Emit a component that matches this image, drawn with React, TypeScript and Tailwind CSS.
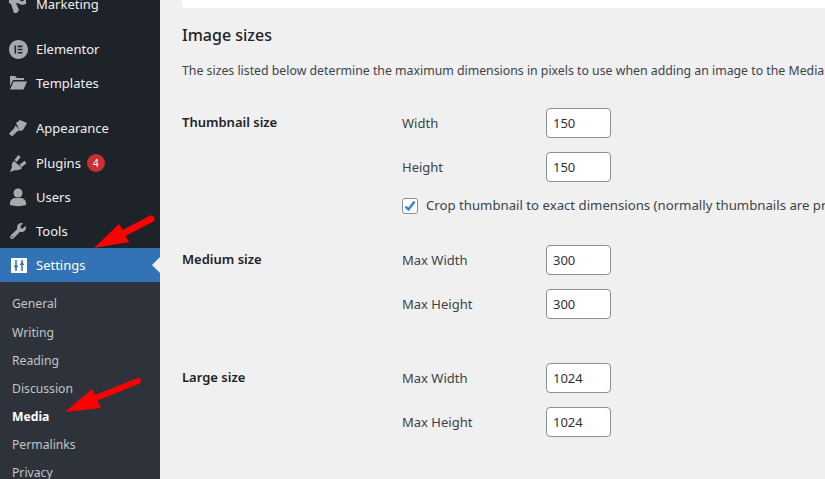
import { FaWrench } from "react-icons/fa";
import { SiElementor } from "react-icons/si";
import type { ReactNode } from "react";

function Icon({ children }: { children: ReactNode }) {
  return (
    <svg width="20" height="20" viewBox="0 0 20 20" fill="currentColor">
      {children}
    </svg>
  );
}

function MenuItem({ icon, label, badge }: { icon: ReactNode; label: string; badge?: string }) {
  return (
    <div className="flex h-[34px] items-center text-[#f0f0f1]">
      <span className="flex w-[36px] shrink-0 justify-center text-[#a7aaad]">{icon}</span>
      <span className="pt-[2px]">{label}</span>
      {badge && (
        <span className="ml-[6px] flex h-[18px] w-[18px] items-center justify-center rounded-full bg-[#ca2f33] text-[10px] text-white">
          {badge}
        </span>
      )}
    </div>
  );
}

function SizeField({ label, value }: { label: string; value: string }) {
  return (
    <div className="flex h-[30px] items-center">
      <span className="w-[144px] shrink-0 pt-[2px] text-[#3c434a]">{label}</span>
      <input
        readOnly
        value={value}
        className="h-[30px] w-[65px] rounded-[4px] border border-[#8c8f94] bg-white px-[6px] text-[#2c3338] outline-none"
      />
    </div>
  );
}

function SizeRow({ title, className, children }: { title: string; className: string; children: ReactNode }) {
  return (
    <div className={`flex ${className}`}>
      <div className="w-[220px] shrink-0 pt-[5px] font-semibold text-[#1d2327]">{title}</div>
      <div className="flex min-w-0 flex-col gap-[14px]">{children}</div>
    </div>
  );
}

export default function App() {
  return (
    <div className="relative flex h-[479px] w-[825px] overflow-hidden bg-[#f0f0f0] font-['Noto_Sans',sans-serif] text-[13px]">
      <aside className="-mt-[13px] w-[160px] shrink-0 bg-[#1e232a]">
        <MenuItem
          label="Marketing"
          icon={
            <Icon>
              <path d="M1 4l5-1 8-3 4 2v8l-4 1-5-2-1 0 3 7-2 3h-3l-3-9-2-1z" />
              <circle cx="14" cy="5" r="2.2" fill="#1e232a" />
            </Icon>
          }
        />
        <div className="mt-[11px]">
          <MenuItem icon={<SiElementor size={19} />} label="Elementor" />
          <MenuItem
            label="Templates"
            icon={
              <Icon>
                <path d="M2 3h5l2 2h7v2H5l-3 6z" />
                <path d="M5.5 8.500H19l-3.500 8H2z" />
              </Icon>
            }
          />
        </div>
        <div className="mt-[11px]">
          <MenuItem
            label="Appearance"
            icon={
              <Icon>
                <path d="M8 5l4-3 7 3-4 7-3 1z" />
                <path d="M7.500 7.500l4.500 4.500-3 1.500-5 5-3-3 5-5z" />
              </Icon>
            }
          />
          <div className="mt-[1px]">
            <MenuItem
              label="Plugins"
              badge="4"
              icon={
                <Icon>
                  <path d="M2 19l2-5c-.5-2 0-4 1-5l1-1 8 7-1 1c-1.500 1-3.500 1.500-5.500 1z" />
                  <path d="M7.500 8l4-5M12.500 13l5-4" fill="none" stroke="currentColor" strokeWidth="3" />
                </Icon>
              }
            />
          </div>
          <MenuItem
            label="Users"
            icon={
              <Icon>
                <circle cx="10" cy="6" r="4.500" />
                <path d="M2 18v-2c0-3 3-5 5-5h6c2 0 5 2 5 5v2c-5 1.500-11 1.500-16 0z" />
              </Icon>
            }
          />
          <MenuItem icon={<FaWrench size={16} />} label="Tools" />
        </div>
        <div className="relative flex h-[34px] items-center bg-[#3173b4] text-white">
          <span className="flex w-[38px] shrink-0 justify-center">
            <svg width="16" height="15" viewBox="0 0 16 15">
              <rect width="16" height="15" fill="#fff" />
              <path d="M5 2v11M11 2v11" stroke="#3173b4" strokeWidth="1.500" />
              <path d="M2.500 7.500h5l-2.500 3.500zM8.500 7h5l-2.500-3.500z" fill="#3173b4" />
            </svg>
          </span>
          <span className="-ml-[2px] pt-[2px]">Settings</span>
          <span className="absolute right-0 top-[9px] h-0 w-0 border-y-[8px] border-r-[8px] border-y-transparent border-r-[#f0f0f0]" />
        </div>
        <div className="bg-[#2e333b] pt-[7.4px] text-[12.2px] text-[#c3c4c7]">
          {["General", "Writing", "Reading", "Discussion", "Media", "Permalinks", "Privacy"].map((item) => (
            <div
              key={item}
              className={`flex h-[28.2px] items-center pl-[12px] pt-[2px] ${item === "Media" ? "font-bold text-white" : ""}`}
            >
              {item}
            </div>
          ))}
        </div>
      </aside>

      <main className="min-w-0 flex-1 pl-[22px]">
        <div className="h-[8px] w-[800px] rounded-b-[4px] bg-white" />
        <h2 className="mt-[16px] text-[16px] font-medium leading-[22px] text-[#1d2327]">Image sizes</h2>
        <p className="mt-[15px] whitespace-nowrap text-[12.3px] leading-[20px] text-[#3c434a]">
          The sizes listed below determine the maximum dimensions in pixels to use when adding an image to the Media Library.
        </p>

        <SizeRow title="Thumbnail size" className="mt-[27px]">
          <SizeField label="Width" value="150" />
          <SizeField label="Height" value="150" />
          <label className="mt-[1px] flex h-[18px] items-center whitespace-nowrap text-[13.2px] text-[#3c434a]">
            <span className="mr-[8px] flex h-[16px] w-[16px] shrink-0 items-center justify-center rounded-[3px] border border-[#8c8f94] bg-white">
              <svg width="14" height="14" viewBox="0 0 14 14">
                <path d="M2.500 7.500l3 3 6-8" fill="none" stroke="#3582c4" strokeWidth="2.400" />
              </svg>
            </span>
            Crop thumbnail to exact dimensions (normally thumbnails are proportional)
          </label>
        </SizeRow>
        <SizeRow title="Medium size" className="mt-[30px]">
          <SizeField label="Max Width" value="300" />
          <SizeField label="Max Height" value="300" />
        </SizeRow>
        <SizeRow title="Large size" className="mt-[44px]">
          <SizeField label="Max Width" value="1024" />
          <SizeField label="Max Height" value="1024" />
        </SizeRow>
      </main>

      {/* red annotation arrows */}
      <svg className="absolute left-0 top-0" width="170" height="479" viewBox="0 0 170 479">
        <path d="M94 248L119 224l10 18z" fill="#f00" />
        <path d="M122 234L151 219" stroke="#f00" strokeWidth="7" strokeLinecap="round" />
        <path d="M65 412L92 389l9 19z" fill="#f00" />
        <path d="M96 398L138 381" stroke="#f00" strokeWidth="6" strokeLinecap="round" />
      </svg>
    </div>
  );
}
